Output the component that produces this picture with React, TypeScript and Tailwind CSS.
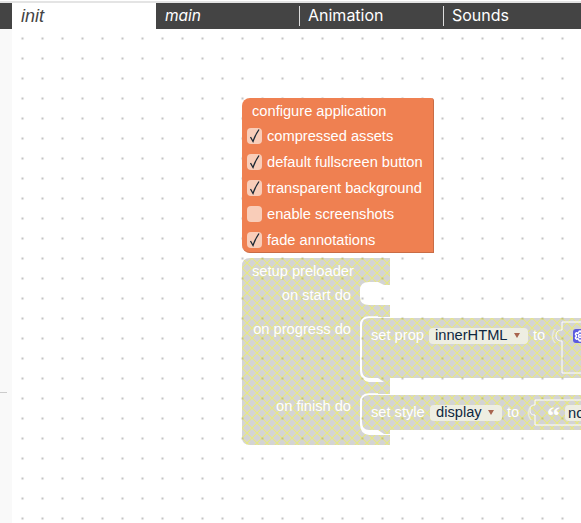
import { Settings } from 'lucide-react'

const sans = "font-['Liberation_Sans',Arial,sans-serif]"

const tabs = [
	{ label: 'main', italic: true, width: 'w-[143px]', border: false },
	{ label: 'Animation', italic: false, width: 'w-[144px]', border: true },
	{ label: 'Sounds', italic: false, width: 'flex-1', border: true }
]

const options = [
	{ label: 'compressed assets', checked: true },
	{ label: 'default fullscreen button', checked: true },
	{ label: 'transparent background', checked: true },
	{ label: 'enable screenshots', checked: false },
	{ label: 'fade annotations', checked: true }
]

const disabledShape =
	'M8,0 H148 V27 H142 L136,24 H127 Q118,24 118,32 V39 Q118,47 127,47 H148 V59 H127 Q118,59 118,67 V112 Q118,122 127,124 H148 V136 H127 Q118,136 118,144 V166 Q118,176 127,177 H148 V187 H8 Q0,187 0,179 V8 Q0,0 8,0 Z ' +
	'M127,60 H340 V120 H148 V124 H142 L136,120 H127 Q120,120 120,112 V67 Q120,60 127,60 Z ' +
	'M127,137 H340 V172 H148 V176 H142 L136,172 H127 Q120,172 120,164 V144 Q120,137 127,137 Z'

const Check = () => (
	<svg width="16" height="16" viewBox="0 0 16 16" className="absolute left-0 top-0">
		<path d="M3.5 9 L6 13.5 Q8.5 6.5 12 1.5" fill="none" stroke="#1c2733" strokeWidth="1.3" />
	</svg>
)

const ConfigureBlock = () => (
	<div
		className={`absolute left-[230px] top-[69px] w-[192px] h-[155px] bg-[#ef8051] rounded-l-[8px] rounded-tr-[3px] border-r border-b border-[#c96c45] text-white text-[14.67px] ${sans}`}
	>
		<div className="h-[25px] pl-[10px] pt-[5px] leading-[17px]">configure application</div>
		<div className="flex flex-col">
			{options.map(o => (
				<div key={o.label} className="flex items-center h-[26px] pl-[5px] gap-[5px]">
					<div className="relative w-[15px] h-[16px] rounded-[4px] bg-[#f9cdb9]">{o.checked && <Check />}</div>
					<span className="leading-[17px]">{o.label}</span>
				</div>
			))}
		</div>
	</div>
)

const Dropdown = ({ label, width }: { label: string; width: string }) => (
	<div
		className={`flex items-center justify-between shrink-0 h-[16px] pl-[6px] pr-[8px] rounded-[4px] bg-[#eeeee2] text-[#0f2740] ${width}`}
	>
		<span>{label}</span>
		<span className="w-0 h-0 border-x-[3.5px] border-x-transparent border-t-[5px] border-t-[#a8654f]" />
	</div>
)

const PreloaderBlock = () => (
	<div className={`absolute left-[230px] top-[229px] w-[339px] h-[190px] text-white text-[14.67px] leading-[17px] ${sans}`}>
		<svg width="339" height="190" className="absolute left-0 top-0">
			<defs>
				<pattern id="disabled" width="10" height="10" patternUnits="userSpaceOnUse">
					<rect width="10" height="10" fill="#aaa" />
					<path d="M0 0 L10 10 M10 0 L0 10" stroke="#d2d200" strokeWidth="1.1" />
				</pattern>
			</defs>
			<path d={disabledShape} fill="url(#disabled)" fillOpacity="0.5" />
			<path d="M119,67 Q119,59 127,59 H136 M119,112 Q119,120 127,121 H136" fill="none" stroke="#fff" strokeWidth="1.5" />
			<path d="M119,144 Q119,136 127,136 H136 M119,164 Q119,173 127,174 H136" fill="none" stroke="#fff" strokeWidth="1.5" />
			<path d="M320,64 H339 M320,115 H339 M320,64 V72 C316,72 314,74 314,78 C314,81 316,83 320,83 V115" fill="none" stroke="#fff" />
			<path d="M293,142 H339 M293,167 H339 M293,142 V147 C289,147 288,149 288,152 C288,155 289,157 293,157 V167" fill="none" stroke="#fff" />
		</svg>

		<div className="relative flex flex-col pt-[5px]">
			<div className="h-[19px] pl-[10px]">setup preloader</div>
			<div className="flex h-[35px] pt-[5px]">
				<span className="w-[109px] text-right">on start do</span>
			</div>
			<div className="flex h-[77px] pt-[4px] gap-[20px]">
				<span className="w-[109px] text-right shrink-0">on progress do</span>
				<div className="flex items-center h-[17px] mt-[6px] gap-[5px] whitespace-nowrap">
					<span className="w-[53px] shrink-0">set prop</span>
					<Dropdown label="innerHTML" width="w-[99px]" />
					<span className="w-[12px] shrink-0">to</span>
					<span className="w-[5px] ml-[1px] shrink-0 text-[#ecece0]">(</span>
					<div className="ml-[12px] w-[14px] h-[14px] shrink-0 rounded-[3px] bg-[#5b5be0] flex items-center justify-center">
						<Settings size={12} strokeWidth={3} className="text-white" />
					</div>
				</div>
			</div>
			<div className="flex h-[51px] pt-[4px] gap-[20px]">
				<span className="w-[109px] text-right shrink-0">on finish do</span>
				<div className="flex items-center h-[17px] mt-[6px] gap-[5px] whitespace-nowrap">
					<span className="w-[54px] shrink-0">set style</span>
					<Dropdown label="display" width="w-[72px]" />
					<span className="w-[12px] shrink-0">to</span>
					<span className="w-[5px] ml-[3px] shrink-0 text-[#ecece0]">(</span>
					<span className="ml-[10px] w-[12px] h-[17px] pt-[3px] shrink-0 text-[26px] font-bold font-['Liberation_Serif',serif]">“</span>
					<div className="ml-[1px] w-[32px] h-[16px] pl-[3px] shrink-0 rounded-[4px] bg-[#eeeee2] text-[#0f2740]">none</div>
				</div>
			</div>
		</div>
	</div>
)

const App = () => {
	return (
		<div className="relative w-full h-screen overflow-hidden bg-white flex flex-col">
			<div className="h-[2px] bg-[#e4e4e4] mt-[1px] shrink-0" />
			<div className="flex h-[26px] shrink-0 bg-[#444444] font-['Inter',sans-serif] text-[16px] text-white">
				<div className="w-[12px]" />
				<div className={`w-[144px] bg-white text-[#444] italic pl-[9px] text-[18px] ${sans}`}>init</div>
				{tabs.map(t => (
					<div key={t.label} className={`${t.width} flex items-center pl-[9px] relative ${t.italic ? 'italic text-[15.5px] pb-[1px]' : 'pb-[3px]'}`}>
						{t.border && <span className="absolute left-0 top-[3px] bottom-[3px] w-px bg-[#ddd]" />}
						{t.label}
					</div>
				))}
			</div>
			<div className="flex flex-1">
				<div className="relative w-[12px] bg-[#f9f9f9]">
					<span className="absolute left-0 top-[363px] w-[7px] h-px bg-[#ccc]" />
				</div>
				<div className="relative flex-1 bg-[radial-gradient(circle,#c4c4c4_1px,transparent_1.6px)] bg-[length:20px_20px] bg-[position:0.5px_-0.5px]">
					<ConfigureBlock />
					<PreloaderBlock />
				</div>
			</div>
		</div>
	)
}

export default App
